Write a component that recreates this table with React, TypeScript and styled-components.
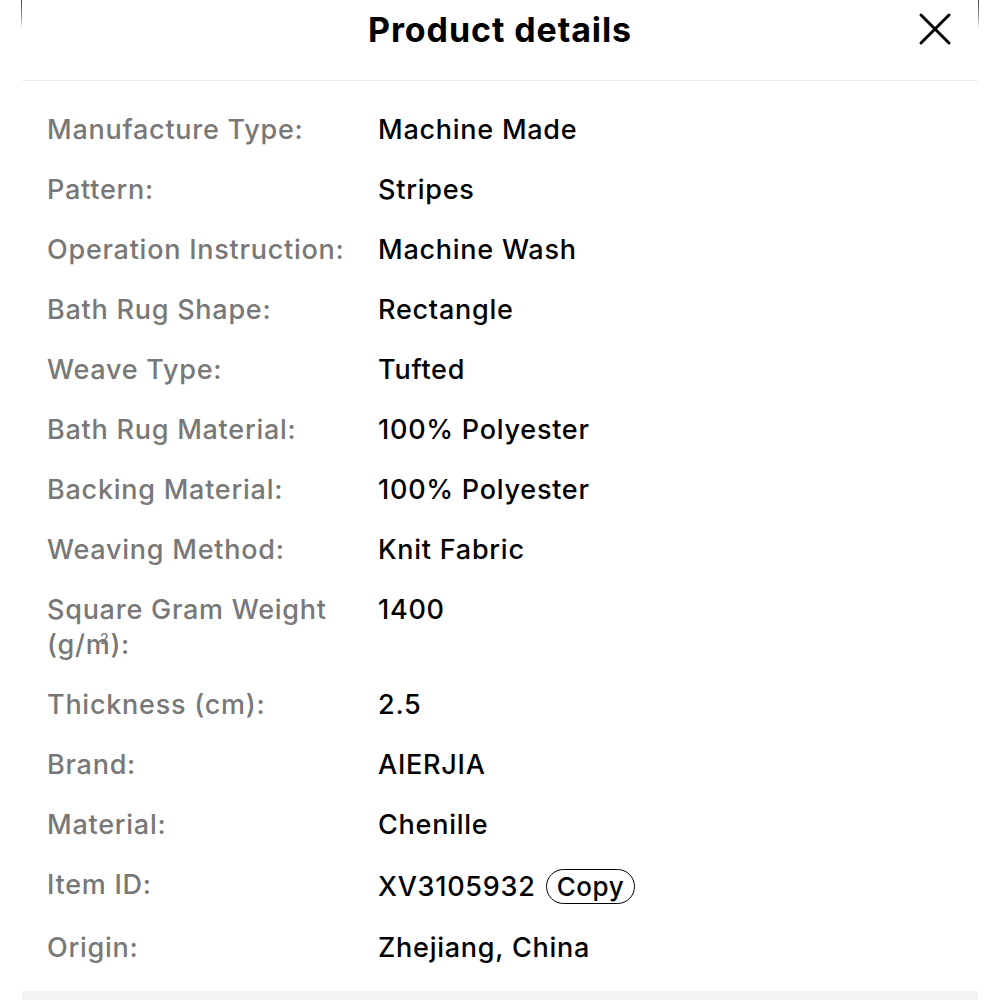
import React from "react";
import styled, { createGlobalStyle } from "styled-components";

const Global = createGlobalStyle`
  html, body { margin: 0; padding: 0; background: #ffffff; }
  body { font-family: Inter, "Noto Sans", "Liberation Sans", sans-serif; -webkit-font-smoothing: antialiased; }
`;

const Sheet = styled.div`
  margin: 0 21px 0 21px;
  min-height: 1000px;
  display: flex;
  flex-direction: column;
  border-left: 1.5px solid transparent;
  border-right: 1.5px solid transparent;
  border-image: linear-gradient(to bottom, #3a3a3a 0px, #9a9a9a 18px, rgba(255,255,255,0) 30px) 1;
  border-top: 0;
  border-bottom: 0;
`;

const Header = styled.header`
  height: 80px;
  display: grid;
  grid-template-columns: 80px 1fr 80px;
  align-items: center;
  border-bottom: 1.5px solid #ececec;
`;

const Title = styled.h1`
  grid-column: 2;
  margin: 0;
  text-align: center;
  font-size: 34px;
  font-weight: 700;
  letter-spacing: 0.9px;
  color: #000;
  padding-bottom: 22px;
`;

const CloseButton = styled.button`
  grid-column: 3;
  justify-self: end;
  margin-right: 23px;
  margin-bottom: 22px;
  width: 40px;
  height: 40px;
  border: 0;
  background: none;
  padding: 0;
  display: flex;
  align-items: center;
  justify-content: center;
  cursor: pointer;
`;

const List = styled.dl`
  margin: 0;
  padding: 31px 0 26px 25px;
  display: flex;
  flex-direction: column;
  gap: 25px;
`;

const Row = styled.div`
  display: grid;
  grid-template-columns: 331px 1fr;
  align-items: center;
`;

const Label = styled.dt`
  font-size: 27px;
  font-weight: 500;
  line-height: 35px;
  color: #787878;
  letter-spacing: 0.75px;
  align-self: start;
  max-width: 300px;
`;

const Value = styled.dd`
  margin: 0;
  font-size: 27px;
  font-weight: 500;
  line-height: 35px;
  color: #000;
  letter-spacing: 0.75px;
  display: flex;
  align-items: center;
  gap: 10px;
  align-self: start;
`;

const Unit = styled.span`
  position: relative;
  display: inline-block;
`;

const Sup = styled.span`
  position: absolute;
  left: 58%;
  top: 5px;
  font-size: 14px;
  line-height: 1;
  letter-spacing: 0;
`;

const CopyButton = styled.button`
  font-family: inherit;
  font-size: 26px;
  font-weight: 500;
  line-height: 1;
  height: 35px;
  margin: 2px 0 1px;
  padding: 0 10px;
  border: 1.5px solid #000;
  border-radius: 18px;
  background: #fff;
  color: #000;
  letter-spacing: 0.6px;
  cursor: pointer;
`;

const Footer = styled.div`
  margin-top: auto;
  height: 9px;
  background: #f4f4f4;
`;

const rows: { label: React.ReactNode; value: string; copy?: boolean }[] = [
  { label: "Manufacture Type:", value: "Machine Made" },
  { label: "Pattern:", value: "Stripes" },
  { label: "Operation Instruction:", value: "Machine Wash" },
  { label: "Bath Rug Shape:", value: "Rectangle" },
  { label: "Weave Type:", value: "Tufted" },
  { label: "Bath Rug Material:", value: "100% Polyester" },
  { label: "Backing Material:", value: "100% Polyester" },
  { label: "Weaving Method:", value: "Knit Fabric" },
  {
    label: (
      <>
        Square Gram Weight (g/
        <Unit>
          m<Sup>2</Sup>
        </Unit>
        ):
      </>
    ),
    value: "1400",
  },
  { label: "Thickness (cm):", value: "2.5" },
  { label: "Brand:", value: "AIERJIA" },
  { label: "Material:", value: "Chenille" },
  { label: "Item ID:", value: "XV3105932", copy: true },
  { label: "Origin:", value: "Zhejiang, China" },
];

export default function App() {
  return (
    <>
      <Global />
      <Sheet>
        <Header>
          <Title>Product details</Title>
          <CloseButton aria-label="Close">
            <svg width="34" height="34" viewBox="0 0 34 34" fill="none">
              <path d="M3 3 L31 31 M31 3 L3 31" stroke="#000" strokeWidth="3" strokeLinecap="round" />
            </svg>
          </CloseButton>
        </Header>
        <List>
          {rows.map((r, i) => (
            <Row key={i}>
              <Label>{r.label}</Label>
              <Value>
                {r.value}
                {r.copy && <CopyButton>Copy</CopyButton>}
              </Value>
            </Row>
          ))}
        </List>
        <Footer />
      </Sheet>
    </>
  );
}
